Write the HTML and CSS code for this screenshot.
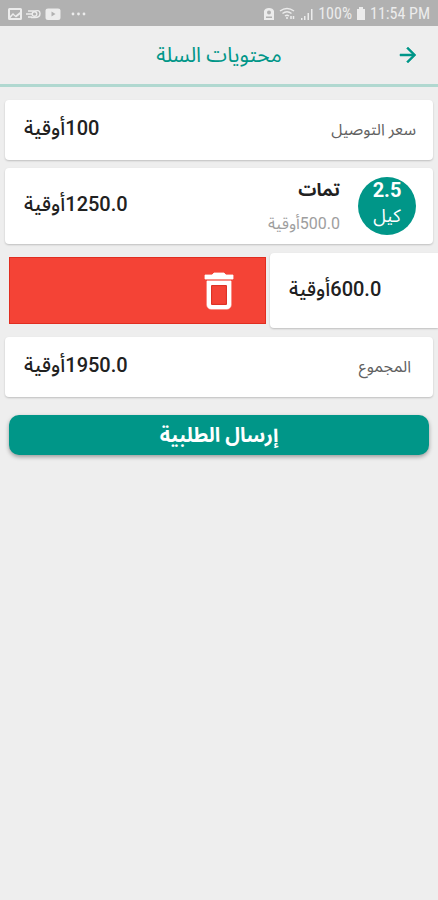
FILE: index.html
```html
<!DOCTYPE html>
<html lang="ar" dir="rtl">
<head>
<meta charset="utf-8">
<meta name="viewport" content="width=device-width, initial-scale=1">
<title>محتويات السلة</title>
<link rel="stylesheet" href="styles.css">
</head>
<body>
<div class="status" dir="ltr">
  <div class="status-group">
    <svg width="14" height="14" viewBox="0 0 14 14"><path fill="currentColor" fill-rule="evenodd" d="M1.500 1h11q1.500 0 1.500 1.500v9q0 1.500-1.500 1.500h-11Q0 13 0 11.500v-9Q0 1 1.500 1zM2 3v6l3-3 2.500 2.500L12 5V3zM2.500 11H12V7.500L8 10.500 5 8z"/></svg>
    <svg width="15" height="14" viewBox="0 0 15 14" fill="none" stroke="currentColor" stroke-width="1.400"><path d="M2 4h7q5-1.500 5 2.500T9 10.500H5M0 7h6M2 10h4"/><circle cx="8.500" cy="7" r="2.300"/></svg>
    <svg width="16" height="14" viewBox="0 0 16 14"><path fill="currentColor" fill-rule="evenodd" d="M3 1.500h10q2.500 0 2.500 2v7q0 2.500-2.500 2.500H3Q.5 13 .5 10.500v-7q0-2 2.500-2zM6.500 4.500v5l4-2.500z"/></svg>
    <svg class="more" width="16" height="14" viewBox="0 0 16 14" fill="currentColor"><circle cx="2" cy="7" r="1.400"/><circle cx="7.500" cy="7" r="1.400"/><circle cx="13" cy="7" r="1.400"/></svg>
  </div>
  <div class="status-group">
    <svg width="12" height="14" viewBox="0 0 12 14"><path fill="currentColor" fill-rule="evenodd" d="M1 4q1-3 5-3t5 3v9H1zM6 3.500a2 2 0 1 0 0 4 2 2 0 0 0 0-4zM3 9.500v1.500h6V9.500z"/></svg>
    <svg width="17" height="14" viewBox="0 0 17 14" fill="none" stroke="currentColor" stroke-width="1.500"><path d="M1 4q7-5 14 0M3.500 6.500q4.500-3.500 9 0M6 9q2-1.500 4 0"/><path d="M8 10v2M12 9v3M14.500 9v3"/></svg>
    <svg width="14" height="14" viewBox="0 0 14 14" fill="currentColor"><path d="M1 11h1.500v2H1zM4 9h1.500v4H4zM7.500 6H9v7H7.500zM11 2h1.500v11H11z"/></svg>
    <span>100%</span>
    <svg width="10" height="14" viewBox="0 0 10 14"><path fill="currentColor" d="M3 0h4v2h2v11H1V2h2z"/></svg>
    <span>11:54 PM</span>
  </div>
</div>
<header class="bar">
  <button class="back" type="button" aria-label="رجوع"><svg width="24" height="24" viewBox="0 0 24 24"><path fill="currentColor" stroke="currentColor" stroke-width=".5" d="M12 4l-1.410 1.410L16.170 11H4v2h12.170l-5.580 5.590L12 20l8-8z"/></svg></button>
  <h1>محتويات السلة</h1>
</header>
<main>
  <section class="card row">
    <span class="label">سعر التوصيل</span>
    <span class="price">100أوقية</span>
  </section>
  <section class="card row item">
    <div class="qty"><b>2.5</b><span>كيل</span></div>
    <div class="info"><h2>تمات</h2><span class="unit">500.0أوقية</span></div>
    <span class="price">1250.0أوقية</span>
  </section>
  <section class="swipe">
    <div class="card row slid"><span class="price">600.0أوقية</span></div>
    <button class="delete" type="button" aria-label="حذف"><svg width="48" height="48" viewBox="0 0 24 24"><path fill="currentColor" stroke="currentColor" stroke-width=".4" d="M6 19c0 1.100.9 2 2 2h8c1.100 0 2-.9 2-2V7H6v12zM8 9h8v10H8V9zm7.500-5l-1-1h-5l-1 1H5v2h14V4h-3.500z"/><path fill="none" stroke="#d9291c" stroke-width=".5" d="M8.300 9.300h7.400v9.400H8.300z"/></svg></button>
  </section>
  <section class="card row">
    <span class="label total">المجموع</span>
    <span class="price">1950.0أوقية</span>
  </section>
  <button class="send" type="button">إرسال الطلبية</button>
</main>
</body>
</html>
```
FILE: styles.css
```css
* { box-sizing: border-box; }
body {
  margin: 0;
  min-height: 100vh;
  background: #eeeeee;
  color: #212121;
  font-family: Roboto, "Noto Sans Arabic", "DejaVu Sans", sans-serif;
  overflow-x: hidden;
}
svg { display: block; flex: none; }
button { border: 0; padding: 0; font-family: inherit; cursor: pointer; }
.status {
  height: 26px;
  padding: 2px 8px 0;
  display: flex;
  align-items: center;
  justify-content: space-between;
  background: #b1b1b1;
  color: #ececec;
  font-family: "Roboto Condensed", Roboto, sans-serif;
  font-size: 16px;
  line-height: 20px;
}
.status-group { display: flex; align-items: center; gap: 4px; }
.more { margin-left: 6px; }
.bar {
  height: 61px;
  padding: 0 18px;
  display: grid;
  grid-template-columns: 24px 1fr 24px;
  align-items: center;
  border-bottom: 3px solid #b0d8d0;
  color: #009688;
}
.back { background: none; color: inherit; }
h1 { margin: 0; font-size: 21px; font-weight: 400; line-height: 28px; text-align: center; }
main { padding-top: 13px; }
.card {
  background: #ffffff;
  border-radius: 4px;
  box-shadow: 0 1px 2px rgba(0, 0, 0, 0.2);
}
.row {
  min-height: 60px;
  margin: 0 5px 8px;
  padding: 0 17px 0 19px;
  display: flex;
  align-items: center;
  justify-content: space-between;
}
.item { min-height: 76px; }
.label { font-size: 16px; color: #616161; }
.total { padding-right: 5px; }
.price { font-size: 20px; font-weight: 500; line-height: 28px; margin-bottom: 4px; }
.qty {
  width: 58px;
  height: 58px;
  border-radius: 50%;
  background: #009688;
  color: #ffffff;
  display: flex;
  flex-direction: column;
  align-items: center;
  font-size: 18px;
  line-height: 26px;
}
.qty b { font-size: 20px; }
.info { flex: 1; padding-right: 18px; display: flex; flex-direction: column; gap: 8px; }
h2 { margin: 0; font-size: 18px; font-weight: 700; line-height: 28px; }
.unit { font-size: 16px; line-height: 24px; color: #9e9e9e; }
.swipe {
  display: grid;
  grid-template-columns: 168px 1fr;
  column-gap: 4px;
  padding: 1px 0 0 9px;
  margin-bottom: 9px;
  align-items: center;
}
.slid { min-height: 75px; margin: 0; justify-content: flex-end; border-radius: 4px 0 0 4px; }
.delete {
  height: 67px;
  background: #f44336;
  border: 1px solid #e02d20;
  color: #ffffff;
  display: flex;
  align-items: center;
  padding-right: 22px;
}
.send {
  display: block;
  width: calc(100% - 18px);
  height: 40px;
  margin: 18px 9px 0;
  padding-bottom: 3px;
  border-radius: 10px;
  background: #009688;
  color: #ffffff;
  font-size: 20px;
  font-weight: 700;
  box-shadow: 0 2px 4px rgba(0, 0, 0, 0.35);
}
```
